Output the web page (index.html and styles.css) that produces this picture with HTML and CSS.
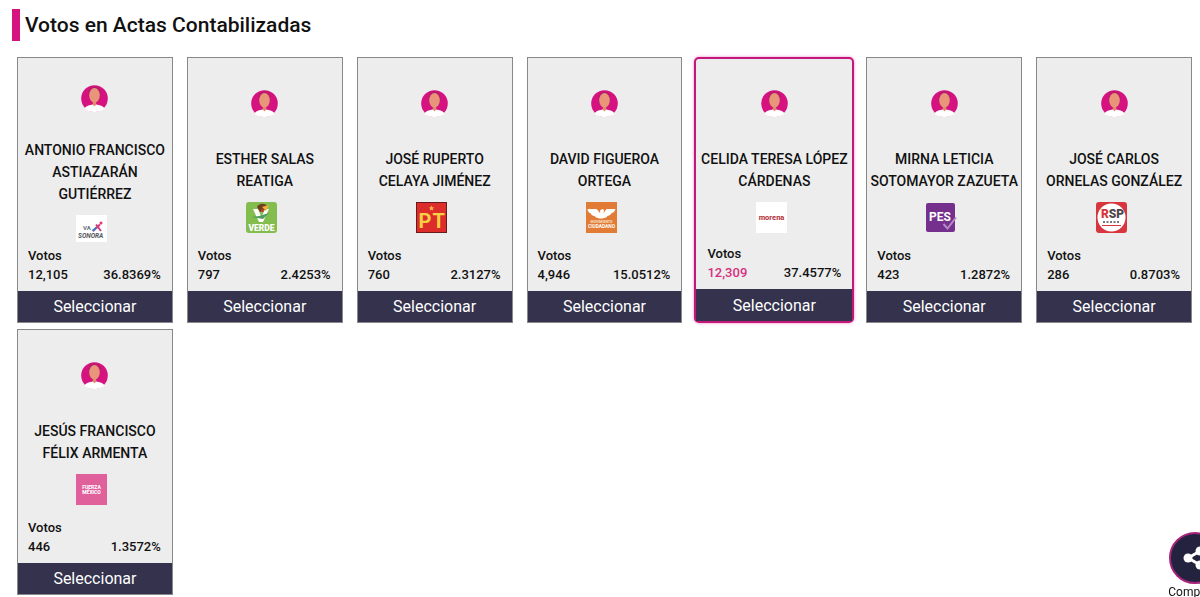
FILE: index.html
```html
<!DOCTYPE html>
<html lang="es">
<head>
    <meta charset="UTF-8">
    <meta name="viewport" content="width=device-width, initial-scale=1.0">
    <title>Votos en Actas Contabilizadas</title>

    <link rel="stylesheet" href="styles.css">
</head>
<body>
    <!-- Shared avatar -->
    <svg class="sprite" aria-hidden="true">
        <symbol id="avatar" viewBox="0 0 27 27">
            <circle cx="13.500" cy="13.500" r="13.300" fill="#d5127f"/>
            <path d="M8 12C6 4 10 1.500 13.500 1.500S21 4 19 12l-2 5h-7z" fill="#b51c68"/>
            <path d="M3.500 23.500c1-2 3-3 6-3.500l4-1 4 1c3 .5 5 1.500 6 3.500-5 4.700-15 4.700-20 0z" fill="#fff"/>
            <path d="M11.800 15h3.400v4.500l-1.700 2-1.700-2z" fill="#e08a6c"/>
            <ellipse cx="13.500" cy="10.300" rx="5.300" ry="7.300" fill="#e8957a"/>
        </symbol>
    </svg>

    <main class="container">
        <h1 class="title">Votos en Actas Contabilizadas</h1>

        <div class="cards">
            <article class="card">
                <div class="photo"><svg class="avatar"><use href="#avatar"/></svg></div>
                <div class="candidate">
                    <h2 class="name">ANTONIO FRANCISCO ASTIAZARÁN GUTIÉRREZ</h2>
                    <svg class="logo logo-low" viewBox="0 0 31 27" role="img" aria-label="Va X Sonora">
                        <rect width="31" height="27" fill="#fff"/>
                        <text x="7" y="15" font-size="6" font-weight="700" fill="#666b7c">VA</text>
                        <path d="M17 16l7-6.500M20 9.500l5 6.500" stroke="#d5397c" stroke-width="2" fill="none"/>
                        <path d="M16.500 16l4-3.500" stroke="#3b7fc0" stroke-width="2"/>
                        <circle cx="25" cy="8" r="1.500" fill="#d5397c"/>
                        <text x="2" y="22.500" font-size="6.500" font-weight="700" font-style="italic" fill="#55565e">SONORA</text>
                    </svg>
                </div>
                <dl class="votes">
                    <dt>Votos</dt>
                    <dd>12,105</dd>
                    <dd>36.8369%</dd>
                </dl>
                <button type="button" class="select">Seleccionar</button>
            </article>

            <article class="card">
                <div class="photo"><svg class="avatar"><use href="#avatar"/></svg></div>
                <div class="candidate">
                    <h2 class="name">ESTHER SALAS REATIGA</h2>
                    <svg class="logo" viewBox="0 0 31 31" role="img" aria-label="Verde">
                        <rect width="31" height="31" rx="3" fill="#82bd4e"/>
                        <path d="M7 7h5l3.500 8L19 7h4l-6 13h-4z" fill="#fff"/>
                        <path d="M5 15l8-1 10-3-6 6z" fill="#4f9d63"/>
                        <path d="M11 5c2-4 8-4 10-1l-2 4-5 2z" fill="#713f20"/>
                        <path d="M16 5l7-2-3 6z" fill="#f0b13b"/>
                        <circle cx="16.500" cy="8.500" r="1.500" fill="#d23b29"/>
                        <text x="15.500" y="28.500" font-size="8.500" font-weight="900" text-anchor="middle" fill="#fff">VERDE</text>
                    </svg>
                </div>
                <dl class="votes">
                    <dt>Votos</dt>
                    <dd>797</dd>
                    <dd>2.4253%</dd>
                </dl>
                <button type="button" class="select">Seleccionar</button>
            </article>

            <article class="card">
                <div class="photo"><svg class="avatar"><use href="#avatar"/></svg></div>
                <div class="candidate">
                    <h2 class="name">JOSÉ RUPERTO<br>CELAYA JIMÉNEZ</h2>
                    <svg class="logo" viewBox="0 0 31 31" role="img" aria-label="PT">
                        <rect x=".5" y=".5" width="30" height="30" fill="#dc2d2b" stroke="#6b1a1c"/>
                        <text x="2.500" y="26" font-size="20" font-weight="700" fill="#f7cf43">P</text>
                        <text x="16.500" y="26" font-size="20" font-weight="700" fill="#f7cf43">T</text>
                        <path d="M15.500 3.500l.8 1.700 1.900.2-1.400 1.300.4 1.900-1.700-.9-1.700.9.4-1.900-1.400-1.300 1.900-.2z" fill="#f9b24a"/>
                    </svg>
                </div>
                <dl class="votes">
                    <dt>Votos</dt>
                    <dd>760</dd>
                    <dd>2.3127%</dd>
                </dl>
                <button type="button" class="select">Seleccionar</button>
            </article>

            <article class="card">
                <div class="photo"><svg class="avatar"><use href="#avatar"/></svg></div>
                <div class="candidate">
                    <h2 class="name">DAVID FIGUEROA ORTEGA</h2>
                    <svg class="logo" viewBox="0 0 31 31" role="img" aria-label="Movimiento Ciudadano">
                        <rect width="31" height="31" fill="#e27b35"/>
                        <path d="M1.500 7h8c2 0 3 2 4 4l1-3 2-1 1.500 1-.5 3.500c2-3 2-4.500 4-4.500h8c-1 3-3 4-4 4.300-1 2-3 2.500-4 2.700-1 1.500-3 2-5 2.500h-3c-2-.5-4-1-5-2.500-2 0-3-1-4-2.700-1.500-.3-3-2.300-3-4.300z" fill="#fff"/>
                        <text x="15.500" y="21" font-size="3.500" font-weight="700" text-anchor="middle" fill="#fbe0c9">MOVIMIENTO</text>
                        <text x="15.500" y="25.500" font-size="4.800" font-weight="700" text-anchor="middle" fill="#fff">CIUDADANO</text>
                    </svg>
                </div>
                <dl class="votes">
                    <dt>Votos</dt>
                    <dd>4,946</dd>
                    <dd>15.0512%</dd>
                </dl>
                <button type="button" class="select">Seleccionar</button>
            </article>

            <article class="card leader">
                <div class="photo"><svg class="avatar"><use href="#avatar"/></svg></div>
                <div class="candidate">
                    <h2 class="name">CELIDA TERESA LÓPEZ CÁRDENAS</h2>
                    <svg class="logo" viewBox="0 0 31 31" role="img" aria-label="Morena">
                        <rect width="31" height="31" fill="#fff"/>
                        <text x="15.500" y="18" font-size="7.500" font-weight="800" text-anchor="middle" fill="#b8393f">morena</text>
                    </svg>
                </div>
                <dl class="votes">
                    <dt>Votos</dt>
                    <dd>12,309</dd>
                    <dd>37.4577%</dd>
                </dl>
                <button type="button" class="select">Seleccionar</button>
            </article>

            <article class="card">
                <div class="photo"><svg class="avatar"><use href="#avatar"/></svg></div>
                <div class="candidate">
                    <h2 class="name">MIRNA LETICIA SOTOMAYOR ZAZUETA</h2>
                    <svg class="logo" viewBox="0 0 31 31" role="img" aria-label="PES">
                        <rect y="1" width="29" height="29" rx="2" fill="#74308c"/>
                        <text x="3" y="19" font-size="12" font-weight="700" fill="#fff">PES</text>
                        <path d="M17.500 22l4 4.500 8.500-11" stroke="#b48cc6" stroke-width="2" fill="none"/>
                    </svg>
                </div>
                <dl class="votes">
                    <dt>Votos</dt>
                    <dd>423</dd>
                    <dd>1.2872%</dd>
                </dl>
                <button type="button" class="select">Seleccionar</button>
            </article>

            <article class="card">
                <div class="photo"><svg class="avatar"><use href="#avatar"/></svg></div>
                <div class="candidate">
                    <h2 class="name">JOSÉ CARLOS ORNELAS GONZÁLEZ</h2>
                    <svg class="logo" viewBox="0 0 31 31" role="img" aria-label="RSP">
                        <rect width="31" height="31" rx="3" fill="#d8363e"/>
                        <circle cx="15.500" cy="15.500" r="14" fill="#fff"/>
                        <text x="5" y="16" font-size="12" font-weight="900" fill="#4c4448"><tspan fill="#d8363e">R</tspan>SP</text>
                        <path d="M7 20h17" stroke="#777" stroke-width="2" stroke-dasharray="2 1.500"/>
                        <path d="M6 23.500h19" stroke="#d8363e"/>
                    </svg>
                </div>
                <dl class="votes">
                    <dt>Votos</dt>
                    <dd>286</dd>
                    <dd>0.8703%</dd>
                </dl>
                <button type="button" class="select">Seleccionar</button>
            </article>

            <article class="card">
                <div class="photo"><svg class="avatar"><use href="#avatar"/></svg></div>
                <div class="candidate">
                    <h2 class="name">JESÚS FRANCISCO FÉLIX ARMENTA</h2>
                    <svg class="logo" viewBox="0 0 31 31" role="img" aria-label="Fuerza México">
                        <rect width="31" height="31" fill="#e0609c"/>
                        <text x="15.500" y="15" font-size="5" font-weight="800" text-anchor="middle" fill="#fff">FUERZA</text>
                        <text x="15.500" y="20" font-size="5" font-weight="800" text-anchor="middle" fill="#fff">MÉXICO</text>
                    </svg>
                </div>
                <dl class="votes">
                    <dt>Votos</dt>
                    <dd>446</dd>
                    <dd>1.3572%</dd>
                </dl>
                <button type="button" class="select">Seleccionar</button>
            </article>
        </div>
    </main>

    <button type="button" class="share">
        <span class="share-icon">
            <svg viewBox="0 0 24 24" width="24" height="24" aria-hidden="true">
                <path d="M19 4L5 12l14 8" stroke="#fff" stroke-width="3" fill="none"/>
                <circle cx="5" cy="12" r="4.500" fill="#fff"/>
                <circle cx="17" cy="5" r="4.500" fill="#fff"/>
                <circle cx="17" cy="19" r="4.500" fill="#fff"/>
            </svg>
        </span>
        Compartir
    </button>
</body>
</html>
```

FILE: styles.css
```css
* {
    box-sizing: border-box;
}

body {
    font-family: Roboto, Arial, sans-serif;
    margin: 0;
    color: #111;
    background-color: #fff;
}

.sprite {
    display: none;
}

.container {
    padding: 9px 8px 0 12px;
}

.title {
    margin: 0 0 16px;
    padding-left: 5px;
    border-left: 8px solid #d5127f;
    font-size: 21px;
    font-weight: 500;
    line-height: 32px;
}

.cards {
    display: grid;
    grid-template-columns: repeat(7, minmax(0, 1fr));
    gap: 6px 14px;
    padding-left: 5px;
}

.card {
    display: flex;
    flex-direction: column;
    min-height: 266px;
    border: 1px solid #888;
    background-color: #ededed;
}

.photo {
    flex: 1;
    display: flex;
    align-items: center;
    justify-content: center;
}

.avatar {
    width: 27px;
    height: 27px;
}

.candidate {
    display: flex;
    flex-direction: column;
    align-items: center;
    min-height: 98px;
    padding-bottom: 4px;
}

.name {
    margin: 0 0 10px;
    font-size: 14px;
    font-weight: 500;
    line-height: 22px;
    text-align: center;
}

.logo {
    width: 31px;
    height: 31px;
    margin-right: 6px;
}

.logo-low {
    height: 27px;
}

.votes {
    display: grid;
    grid-template-columns: auto auto;
    justify-content: space-between;
    margin: 0;
    padding: 0 11px 7px 10px;
    font-size: 13px;
    font-weight: 500;
    line-height: 19px;
}

.votes dt {
    grid-column: 1 / 3;
}

.votes dd {
    margin: 0;
}

.select {
    height: 31px;
    padding: 0;
    border: none;
    background-color: #34324d;
    color: #fff;
    font-family: inherit;
    font-size: 16px;
    cursor: pointer;
}

/* Candidate with the most votes */
.leader {
    margin: 0 -2px;
    border: 2px solid #c2187a;
    border-radius: 5px;
    box-shadow: 0 0 3px #f07cc0;
}

.leader .candidate {
    min-height: 96px;
}

.leader .votes {
    padding: 0 11px 7px;
}

.leader dt + dd {
    color: #d6307f;
}

.leader .select {
    height: 32px;
}

.share {
    position: fixed;
    right: -22px;
    bottom: -3px;
    display: flex;
    flex-direction: column;
    align-items: center;
    padding: 0;
    border: none;
    background: none;
    color: #111;
    font-family: inherit;
    font-size: 12px;
    line-height: 16px;
    cursor: pointer;
}

.share-icon {
    display: flex;
    align-items: center;
    justify-content: center;
    width: 52px;
    height: 52px;
    border: 2px solid #a8237b;
    border-radius: 50%;
    background-color: #23223f;
}
```
